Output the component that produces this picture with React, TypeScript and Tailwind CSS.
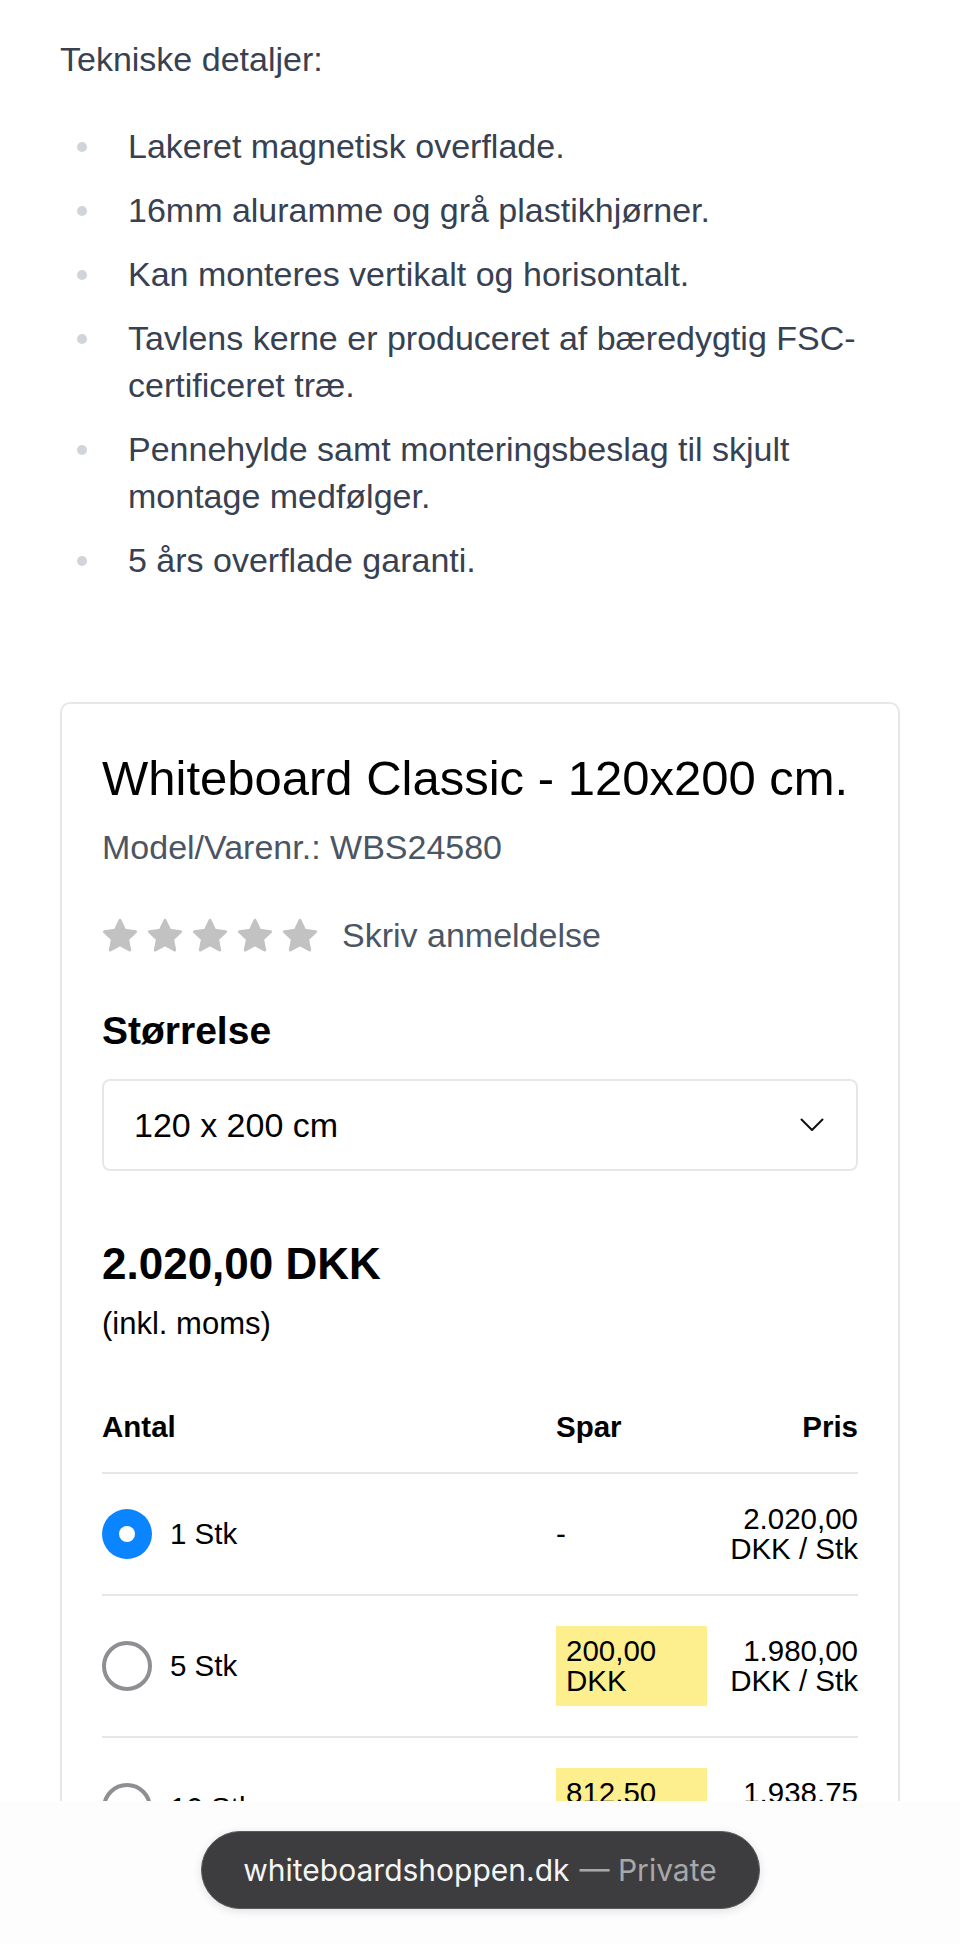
import React from "react";

const specs = [
  "Lakeret magnetisk overflade.",
  "16mm aluramme og grå plastikhjørner.",
  "Kan monteres vertikalt og horisontalt.",
  "Tavlens kerne er produceret af bæredygtig FSC-certificeret træ.",
  "Pennehylde samt monteringsbeslag til skjult montage medfølger.",
  "5 års overflade garanti.",
];

const tiers = [
  { qty: "1 Stk", save: null, price: "2.020,00 DKK / Stk", selected: true },
  { qty: "5 Stk", save: "200,00 DKK", price: "1.980,00 DKK / Stk", selected: false },
  { qty: "10 Stk", save: "812,50 DKK", price: "1.938,75 DKK / Stk", selected: false },
];

function Star() {
  return (
    <svg width="40" height="40" viewBox="0 0 24 24" className="shrink-0">
      <path
        d="M12 2.6l2.85 6 6.5.8-4.8 4.5 1.25 6.5L12 17.2l-5.8 3.2 1.25-6.5-4.8-4.5 6.5-.8z"
        fill="#c2c2c2"
        stroke="#c2c2c2"
        strokeWidth="1.8"
        strokeLinejoin="round"
      />
    </svg>
  );
}

function Radio({ selected }: { selected: boolean }) {
  if (selected) {
    return (
      <div className="w-[50px] h-[50px] rounded-full bg-[#0a84ff] flex items-center justify-center shrink-0">
        <div className="w-[16px] h-[16px] rounded-full bg-white" />
      </div>
    );
  }
  return <div className="w-[50px] h-[50px] rounded-full border-[4px] border-[#8e8e93] bg-white shrink-0" />;
}

export default function App() {
  return (
    <div className="relative w-full h-[1944px] overflow-hidden bg-white font-['Liberation_Sans',Arial,sans-serif]">
      <div className="px-[60px] pt-[36px]">
        {/* Tekniske detaljer */}
        <p className="text-[34px] leading-[47px] text-[#374151]">Tekniske detaljer:</p>
        <ul className="mt-[40px] flex flex-col gap-[17px]">
          {specs.map((s) => (
            <li key={s} className="flex items-start text-[34px] leading-[47px] text-[#374151]">
              <span className="w-[68px] shrink-0 flex items-center h-[47px] pl-[17px]">
                <span className="w-[10px] h-[10px] rounded-full bg-[#d1d5db]" />
              </span>
              <span>{s}</span>
            </li>
          ))}
        </ul>

        {/* Produkt kort */}
        <div className="mt-[118px] border-2 border-[#e5e7eb] rounded-[10px] px-[40px] pt-[44px] pb-[60px]">
          <h1 className="text-[49px] leading-[60px] text-black">Whiteboard Classic - 120x200 cm.</h1>
          <p className="mt-[16px] text-[34px] leading-[47px] text-[#4b5563]">Model/Varenr.: WBS24580</p>

          <div className="mt-[41px] flex items-center h-[47px]">
            <div className="flex items-center gap-[5px] ml-[-2px]">
              <Star />
              <Star />
              <Star />
              <Star />
              <Star />
            </div>
            <span className="ml-[22px] text-[34px] text-[#4b5563]">Skriv anmeldelse</span>
          </div>

          <p className="mt-[48px] text-[39px] leading-[47px] font-bold text-black">Størrelse</p>
          <div className="mt-[25px] h-[92px] border-2 border-[#e5e7eb] rounded-[8px] flex items-center justify-between pl-[30px] pr-[32px]">
            <span className="text-[34px] text-black">120 x 200 cm</span>
            <svg width="24" height="14" viewBox="0 0 24 14" fill="none">
              <path d="M1.5 1.5L12 12L22.5 1.5" stroke="#111" strokeWidth="2" strokeLinecap="round" strokeLinejoin="round" />
            </svg>
          </div>

          <p className="mt-[66px] text-[44px] leading-[54px] font-bold text-black">2.020,00 DKK</p>
          <p className="mt-[11px] text-[31px] leading-[44px] text-black">(inkl. moms)</p>

          {/* Mængderabat */}
          <div className="mt-[36px] text-[29.5px] leading-[30px] text-black">
            <div className="grid grid-cols-[454px_151px_1fr] py-[30px] border-b-2 border-[#e5e7eb] font-bold">
              <span>Antal</span>
              <span>Spar</span>
              <span className="text-right">Pris</span>
            </div>
            {tiers.map((t) => (
              <div key={t.qty} className="grid grid-cols-[454px_151px_1fr] items-center py-[30px] border-b-2 border-[#e5e7eb]">
                <div className="flex items-center gap-[18px]">
                  <Radio selected={t.selected} />
                  <span>{t.qty}</span>
                </div>
                {t.save ? (
                  <div className="bg-[#fdef8e] px-[10px] py-[10px]">{t.save}</div>
                ) : (
                  <div>-</div>
                )}
                <div className="text-right pl-[20px]">{t.price}</div>
              </div>
            ))}
          </div>
        </div>
      </div>

      {/* Safari adresselinje */}
      <div className="absolute left-0 right-0 top-[1801px] bottom-0 bg-[#fdfdfd] flex justify-center pt-[30px]">
        <div className="w-[559px] h-[78px] rounded-full bg-[#3d3d3f] border border-[#5a5a5c] flex items-center justify-center shadow-[0_2px_10px_rgba(0,0,0,0.12)] font-['Inter',sans-serif] text-[30px]">
          <span className="text-[#f5f5f5]">whiteboardshoppen.dk</span>
          <span className="ml-[10px] text-[#a8a8aa]">— Private</span>
        </div>
      </div>
    </div>
  );
}
